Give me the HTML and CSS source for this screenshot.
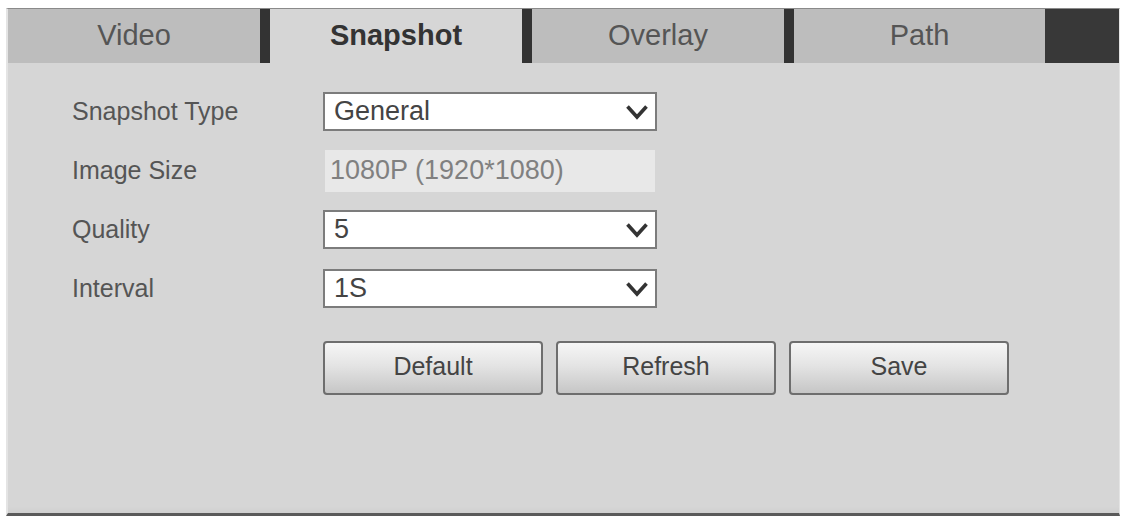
FILE: index.html
```html
<!DOCTYPE html>
<html>
<head>
<meta charset="UTF-8">
<meta name="viewport" content="width=device-width, initial-scale=1">
<link rel="stylesheet" href="styles.css">
</head>
<body>

<div class="panel">
  <div class="tabs">
    <div class="tab">Video</div>
    <div class="tab active">Snapshot</div>
    <div class="tab">Overlay</div>
    <div class="tab last">Path</div>
    <div class="tab-fill"></div>
  </div>

  <div class="form">
    <div class="row">
      <label>Snapshot Type</label>
      <div class="select">
        <span>General</span>
        <svg class="arrow" width="24" height="16" viewBox="0 0 24 16"><path d="M2.5 2.5 L12 13 L21.5 2.5" fill="none" stroke="#333" stroke-width="3.6"/></svg>
      </div>
    </div>
    <div class="row">
      <label>Image Size</label>
      <div class="readonly">1080P (1920*1080)</div>
    </div>
    <div class="row">
      <label>Quality</label>
      <div class="select">
        <span>5</span>
        <svg class="arrow" width="24" height="16" viewBox="0 0 24 16"><path d="M2.5 2.5 L12 13 L21.5 2.5" fill="none" stroke="#333" stroke-width="3.6"/></svg>
      </div>
    </div>
    <div class="row">
      <label>Interval</label>
      <div class="select">
        <span>1S</span>
        <svg class="arrow" width="24" height="16" viewBox="0 0 24 16"><path d="M2.5 2.5 L12 13 L21.5 2.5" fill="none" stroke="#333" stroke-width="3.6"/></svg>
      </div>
    </div>

    <div class="buttons">
      <button class="btn">Default</button>
      <button class="btn">Refresh</button>
      <button class="btn">Save</button>
    </div>
  </div>
</div>

</body>
</html>
```

FILE: styles.css
```css
body {
  margin: 0;
  padding: 8px 6px 0 6px;
  background: #fff;
  font-family: "Liberation Sans", Arial, sans-serif;
}

.panel {
  width: 1111px;
  height: 504px;
  background: #d6d6d6;
  border-top: 1px solid #8a8a8a;
  border-left: 2px solid #e4e4e4;
  border-right: 1px solid #e4e4e4;
  border-bottom: 3px solid #5a5a5a;
  box-shadow: inset 0 -6px 4px -3px #cfcfcf;
}

/* tab strip */
.tabs {
  display: flex;
  height: 54px;
}

.tab {
  flex: none;
  width: 262px;
  box-sizing: border-box;
  background: #bdbdbd;
  border-right: 10px solid #333;
  color: #555;
  font-size: 29px;
  display: flex;
  align-items: center;
  justify-content: center;
  padding-bottom: 2px;
}

.tab.active {
  background: #d6d6d6;
  color: #333;
  font-weight: bold;
}

.tab.last {
  border-right: none;
  width: 251px;
}

.tab-fill {
  flex: 1;
  background: #383838;
}

/* form */
.form {
  padding: 29px 0 0 64px;
}

.row {
  display: flex;
  align-items: center;
  height: 39px;
  margin-bottom: 20px;
}

.row label {
  width: 251px;
  font-size: 25px;
  color: #555;
}

.select {
  width: 334px;
  height: 39px;
  box-sizing: border-box;
  background: #fff;
  border: 2px solid #7c7c7c;
  display: flex;
  align-items: center;
  justify-content: space-between;
  padding: 0 6px 0 9px;
  font-size: 27px;
  color: #444;
}

.select .arrow {
  margin-top: 1px;
}

.readonly {
  width: 330px;
  height: 42px;
  margin-left: 2px;
  box-sizing: border-box;
  background: #e8e8e8;
  display: flex;
  align-items: center;
  padding-left: 5px;
  font-size: 27px;
  color: #808080;
}

.buttons {
  display: flex;
  gap: 13px;
  margin-top: 33px;
  padding-left: 251px;
}

.btn {
  width: 220px;
  height: 54px;
  border: 2px solid #6e6e6e;
  border-radius: 4px;
  background: linear-gradient(#f6f6f6, #e4e4e4 45%, #c6c6c6);
  font-family: "Liberation Sans", Arial, sans-serif;
  font-size: 25px;
  color: #444;
  padding: 0 0 4px 0;
}
```
